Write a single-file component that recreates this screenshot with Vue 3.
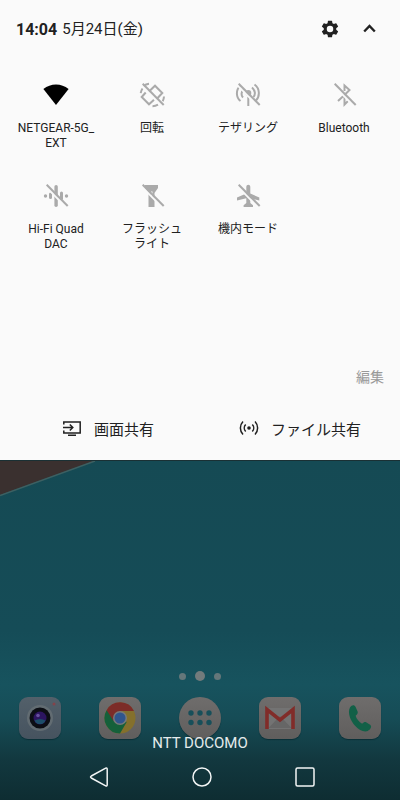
<template>
  <div class="screen">
    <section class="panel">
      <header class="panel-header">
        <time class="clock">14:04</time>
        <span class="date">5月24日(金)</span>
        <button class="icon-button" aria-label="設定">
          <svg width="20" height="20" viewBox="0 0 24 24">
            <path
              fill="#212121"
              d="M19.43 12.98c.04-.32.07-.64.07-.98s-.03-.66-.07-.98l2.11-1.65c.19-.15.24-.42.12-.64l-2-3.46c-.12-.22-.39-.3-.61-.22l-2.49 1c-.52-.4-1.08-.73-1.69-.98l-.38-2.65A.49.49 0 0 0 14 2h-4c-.25 0-.46.18-.49.42l-.38 2.65c-.61.25-1.17.59-1.69.98l-2.49-1c-.23-.09-.49 0-.61.22l-2 3.46c-.13.22-.07.49.12.64l2.11 1.65c-.04.32-.07.65-.07.98s.03.66.07.98l-2.11 1.65c-.19.15-.24.42-.12.64l2 3.46c.12.22.39.3.61.22l2.49-1c.52.4 1.08.73 1.69.98l.38 2.65c.03.24.24.42.49.42h4c.25 0 .46-.18.49-.42l.38-2.65c.61-.25 1.17-.59 1.69-.98l2.49 1c.23.09.49 0 .61-.22l2-3.46c.12-.22.07-.49-.12-.64l-2.11-1.65zM12 15.9a3.9 3.9 0 1 1 0-7.8 3.9 3.9 0 0 1 0 7.8z"
            />
          </svg>
        </button>
        <button class="icon-button" aria-label="閉じる">
          <svg width="20" height="20" viewBox="0 0 20 20">
            <path fill="none" stroke="#212121" stroke-width="2.4" d="M4.2 12.5l5.300-5.500 5.300 5.500" />
          </svg>
        </button>
      </header>

      <div class="tiles">
        <button v-for="tile in tiles" :key="tile.id" class="tile">
          <svg width="28" height="28" viewBox="0 0 28 28">
            <path v-if="tile.id === 'wifi'" fill="#000" d="M1.4 8Q7 3.5 14 3.5T26.6 8L14 24z" />
            <g v-else-if="tile.id === 'rotate'" class="line">
              <path d="M10.700 10.700L17 4.700l7.300 7.300-5.600 6M7.700 11.500L3.700 16l7.300 7.300 5-4.500" />
              <path d="M5.500 5Q8 3 11 2.700M2.700 12.200q.3-2.500 1.800-4.700M26 15.500q-.2 2.500-1.300 4.800M14.500 25.200q3 0 5.500-1.500" />
            </g>
            <g v-else-if="tile.id === 'tethering'" class="line">
              <path d="M6.200 5C1.500 9 2 16.500 6.500 20M9.500 8.500c-2.500 2.500-2.500 6-.5 8" />
              <path d="M20.500 3.500c5.500 4 5.500 12 1.500 16M18 6.500c3.500 3 3.500 7 1.500 9.500" />
              <path d="M14.300 15.500V25" />
              <circle cx="14.300" cy="12" r="3" class="solid" />
            </g>
            <g v-else-if="tile.id === 'bluetooth'" class="line">
              <path d="M14.500 10V4.500l5 4.500-4 4M8 20l6.500-6v9.500l3.500-3.500" />
            </g>
            <g v-else-if="tile.id === 'hifi'" class="solid">
              <circle cx="3.500" cy="14" r="1.700" />
              <rect x="7" y="10.500" width="3" height="6.500" rx="1.500" />
              <rect x="12.400" y="3" width="3.400" height="22" rx="1.700" />
              <rect x="18" y="9.500" width="3" height="8.500" rx="1.500" />
              <circle cx="24.500" cy="14" r="1.700" />
            </g>
            <path
              v-else-if="tile.id === 'flash'"
              class="solid"
              fill-rule="evenodd"
              d="M6.500 3H20v3l-3.500 5v14h-6V11L7 6zM13 9.500V14h1.500V9.500z"
            />
            <path
              v-else
              class="solid"
              d="M12.300 5c0-3 4-3 4 0v6.500l9 4v3l-9-2.200V21l2.700 2.200V25H9.600v-1.800l2.700-2.200v-4.700L3 18.500v-3l9.300-4z"
            />
            <template v-if="tile.off">
              <path class="slash-gap" d="M3.300 4.100l20.900 21.200" />
              <path class="slash" d="M4.700 2.700l21 21.300" />
            </template>
          </svg>
          <span class="tile-label">
            <span v-for="line in tile.label" :key="line">{{ line }}</span>
          </span>
        </button>
      </div>

      <div class="edit-row">
        <button class="edit">編集</button>
      </div>

      <div class="share-row">
        <button class="share">
          <svg width="20" height="20" viewBox="0 0 20 20">
            <path class="share-line" d="M1.800 6.500V4h16.400v11H1.800v-2.400M6 17.300h8M1 9.500h9.500M7.800 6.500l3 3-3 3" />
          </svg>
          <span>画面共有</span>
        </button>
        <button class="share">
          <svg width="20" height="20" viewBox="0 0 20 20">
            <circle cx="10" cy="10" r="1.800" fill="#212121" />
            <path
              class="share-line"
              d="M6.700 6.500c-1.900 2-1.900 5 0 7M13.300 6.500c1.900 2 1.900 5 0 7M4 3.500c-3.500 3.700-3.500 9.300 0 13M16 3.500c3.500 3.700 3.500 9.300 0 13"
            />
          </svg>
          <span>ファイル共有</span>
        </button>
      </div>
    </section>

    <main class="home">
      <svg width="96" height="36" viewBox="0 0 96 36">
        <path fill="#3a302f" d="M0 0h94L0 34z" />
        <path stroke="#3d6062" stroke-width="1.500" d="M95 0L0 34.500" />
      </svg>

      <div class="pager">
        <span class="dot"></span>
        <span class="dot current"></span>
        <span class="dot"></span>
      </div>

      <div class="dock">
        <button class="app camera" aria-label="カメラ">
          <svg width="42" height="42" viewBox="0 0 42 42">
            <circle cx="21" cy="21" r="13" fill="#626c72" />
            <circle cx="21" cy="21" r="10.500" fill="#0c0e14" />
            <circle cx="21" cy="21" r="6.500" fill="#2c1560" />
            <path fill="#1d4e69" d="M15.500 23.500q5.500-3 11 0a6 6 0 0 1-11 0z" />
            <circle cx="19" cy="18.500" r="1.800" fill="#6950a0" />
            <circle cx="35" cy="7" r="1.500" fill="#84434a" />
          </svg>
        </button>
        <button class="app" aria-label="Chrome">
          <svg width="42" height="42" viewBox="0 0 42 42">
            <circle cx="21" cy="21" r="15.500" fill="#84702c" />
            <path fill="#15603a" d="M21 21L7.600 13.200A15.500 15.500 0 0 0 21 36.500l6.700-11.600z" />
            <path fill="#7c2c28" d="M7.600 13.200a15.500 15.500 0 0 1 27.400.8H21l-6.500 10z" />
            <circle cx="21" cy="21" r="7" fill="#77797a" />
            <circle cx="21" cy="21" r="5.500" fill="#30558d" />
          </svg>
        </button>
        <button class="app drawer" aria-label="アプリ">
          <svg width="42" height="42" viewBox="0 0 42 42">
            <g fill="#174f5a">
              <circle v-for="n in 6" :key="n" :cx="12 + ((n - 1) % 3) * 9" :cy="n > 3 ? 25.5 : 16" r="2.700" />
            </g>
          </svg>
        </button>
        <button class="app" aria-label="Gmail">
          <svg width="42" height="42" viewBox="0 0 42 42">
            <path fill="#737373" d="M8 11h26v21H8z" />
            <path fill="#666" d="M9.500 31L21 19l11.500 12z" />
            <path fill="none" stroke="#812c29" stroke-width="3.600" d="M8 32V12.500L21 23l13-10.500V32" />
          </svg>
        </button>
        <button class="app" aria-label="電話">
          <svg width="42" height="42" viewBox="0 0 42 42">
            <path
              fill="#126047"
              d="M11 10.500c1.800-2.800 4.500-3 5.600-.5l2 4.500c.6 1.600-.3 2.700-2 4.200 1 3.300 3.500 6.200 6.500 8 1.700-1.500 3-2.200 4.400-1.300l3.600 2.300c2.300 1.700.3 4.800-2.400 6.200-3.600 1.600-8.700-.9-12.400-4.900-4.900-5.300-8.100-13.500-5.300-18.500z"
            />
          </svg>
        </button>
        <span class="carrier">NTT DOCOMO</span>
      </div>

      <nav class="navbar">
        <button aria-label="戻る">
          <svg width="22" height="22" viewBox="0 0 22 22">
            <path d="M17.700 2.200q1.500-.8 1.500 1v15.600q0 1.800-1.500 1L3.300 12q-1.500-1 0-2z" />
          </svg>
        </button>
        <button aria-label="ホーム">
          <svg width="22" height="22" viewBox="0 0 22 22"><circle cx="11" cy="11" r="9" /></svg>
        </button>
        <button aria-label="履歴">
          <svg width="22" height="22" viewBox="0 0 22 22"><rect x="2" y="2" width="18" height="18" rx="1.500" /></svg>
        </button>
      </nav>
    </main>
  </div>
</template>

<script setup>
import { ref } from 'vue'

const tiles = ref([
  { id: 'wifi', label: ['NETGEAR-5G_', 'EXT'], off: false },
  { id: 'rotate', label: ['回転'], off: true },
  { id: 'tethering', label: ['テザリング'], off: true },
  { id: 'bluetooth', label: ['Bluetooth'], off: true },
  { id: 'hifi', label: ['Hi-Fi Quad', 'DAC'], off: true },
  { id: 'flash', label: ['フラッシュ', 'ライト'], off: true },
  { id: 'airplane', label: ['機内モード'], off: true }
])
</script>

<style>
body {
  margin: 0;
}
</style>

<style scoped>
.screen {
  display: flex;
  flex-direction: column;
  min-height: 100vh;
  font-family: Roboto, 'Noto Sans CJK JP', sans-serif;
  color: #212121;
  background: #154a54;
}

button {
  padding: 0;
  border: none;
  background: none;
  color: inherit;
  font: inherit;
  cursor: pointer;
}

svg {
  display: block;
}

.panel {
  display: flex;
  flex-direction: column;
  background: #fafafa;
  border-bottom: 1px solid #1a3034;
}

.panel-header {
  display: flex;
  align-items: center;
  height: 58px;
  padding: 0 20px 0 16px;
  font-size: 16px;
}

.clock {
  font-weight: 700;
}

.date {
  margin-left: 5px;
  margin-right: auto;
  font-size: 15px;
  line-height: 20px;
}

.icon-button + .icon-button {
  margin-left: 20px;
}

.tiles {
  display: grid;
  grid-template-columns: repeat(4, 1fr);
  grid-auto-rows: 101px;
  padding: 23px 8px 0;
}

.tile {
  display: flex;
  flex-direction: column;
  align-items: center;
  gap: 12px;
}

.tile-label {
  display: flex;
  flex-direction: column;
  font-size: 12px;
  line-height: 15px;
  white-space: nowrap;
}

.line {
  fill: none;
  stroke: #aaa;
  stroke-width: 2;
}

.solid {
  fill: #aaa;
  stroke: none;
}

.slash {
  stroke: #aaa;
  stroke-width: 2;
}

.slash-gap {
  stroke: #fafafa;
  stroke-width: 2;
}

.edit-row {
  display: flex;
  justify-content: flex-end;
  padding: 83px 16px 0;
}

.edit {
  font-size: 14px;
  line-height: 22px;
  color: #999;
}

.share-row {
  display: grid;
  grid-template-columns: 1fr 1fr;
  height: 62px;
  margin-top: 9px;
  margin-bottom: 1px;
  padding: 0 4px 0 12px;
  font-size: 15px;
}

.share {
  display: flex;
  align-items: center;
  justify-content: center;
  gap: 12px;
}

.share-line {
  fill: none;
  stroke: #212121;
  stroke-width: 1.5;
}

.home {
  display: flex;
  flex: 1;
  flex-direction: column;
  background: linear-gradient(#154a54 0%, #154c57 50%, #17535e 66%, #164c56 76%, #12383f 88%, #0e2d32 100%);
}

.pager {
  display: flex;
  align-items: center;
  justify-content: center;
  gap: 9px;
  height: 10px;
  margin-top: auto;
}

.dot {
  width: 7px;
  height: 7px;
  border-radius: 50%;
  background: #65777a;
}

.dot.current {
  width: 10px;
  height: 10px;
  background: #737b7c;
}

.dock {
  position: relative;
  display: grid;
  grid-template-columns: repeat(5, 1fr);
  justify-items: center;
  margin-top: 16px;
}

.app {
  width: 42px;
  height: 42px;
  border-radius: 9px;
  background: linear-gradient(#6f6d6c, #605e5d);
  box-shadow: 0 1px 1px #0b3038;
}

.camera {
  background: linear-gradient(#53606a, #46535f);
}

.drawer {
  border-radius: 50%;
}

.carrier {
  position: absolute;
  top: 36px;
  left: 0;
  right: 0;
  text-align: center;
  font-size: 15px;
  line-height: 20px;
  color: #e4ebec;
}

.navbar {
  display: grid;
  grid-template-columns: repeat(3, 1fr);
  justify-items: center;
  align-items: center;
  height: 46px;
  margin-top: 15px;
  padding: 0 44px 0 48px;
}

.navbar svg {
  fill: none;
  stroke: #f2f5f5;
  stroke-width: 1.5;
}
</style>
